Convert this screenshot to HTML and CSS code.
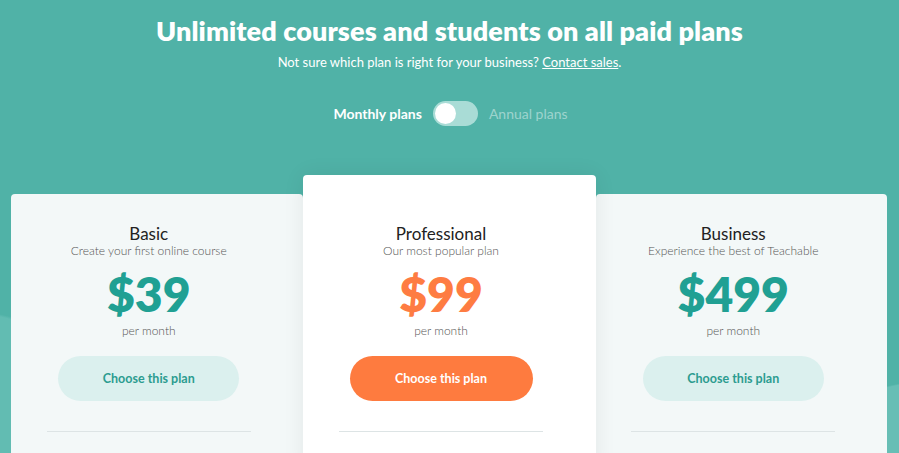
FILE: index.html
```html
<!DOCTYPE html>
<html>
	<head>
		<meta charset="utf-8">
		<title>Pricing</title>
		<link rel="stylesheet" href="styles.css">
	</head>
	<body>
		<div class="pricing">
			<h1 class="title">Unlimited courses and students on all paid plans</h1>
			<p class="sub">Not sure which plan is right for your business? <a href="#">Contact sales</a>.</p>

			<div class="switch">
				<span class="on">Monthly plans</span>
				<span class="toggle"><span class="knob"></span></span>
				<span class="off">Annual plans</span>
			</div>

			<div class="plans">
				<div class="plan">
					<div class="name">Basic</div>
					<div class="desc">Create your first online course</div>
					<div class="price">$39</div>
					<div class="per">per month</div>
					<a class="btn" href="#">Choose this plan</a>
					<div class="line"></div>
				</div>
				<div class="plan pro">
					<div class="name">Professional</div>
					<div class="desc">Our most popular plan</div>
					<div class="price">$99</div>
					<div class="per">per month</div>
					<a class="btn" href="#">Choose this plan</a>
					<div class="line"></div>
				</div>
				<div class="plan">
					<div class="name">Business</div>
					<div class="desc">Experience the best of Teachable</div>
					<div class="price">$499</div>
					<div class="per">per month</div>
					<a class="btn" href="#">Choose this plan</a>
					<div class="line"></div>
				</div>
			</div>
		</div>
	</body>
</html>
```

FILE: styles.css
```css
*{
	box-sizing: border-box;
}
body{
	margin: 0;
	background: #fff;
	font-family: Lato, "Open Sans", sans-serif;
	overflow: hidden;
}
.pricing{  /* 绿色大背景 */
	height: 453px;
	padding-top: 15px;
	text-align: center;
	color: #fff;
	background:
		radial-gradient(ellipse 160px 130px at -40px 440px, #62bcb2 98%, transparent 100%),
		radial-gradient(ellipse 140px 80px at 940px 460px, #67beb5 98%, transparent 100%),
		linear-gradient(#50b2a7 443px, #fff 443px);
}
.title{
	margin: 0;
	font-size: 27px;
	line-height: 31px;
	font-weight: 800;
	letter-spacing: 0.1px;
}
.sub{
	margin: 8px 0 0;
	font-size: 13px;
	line-height: 16px;
}
.sub a{
	color: #fff;
}
.switch{
	margin-top: 31px;
	display: flex;
	justify-content: center;
	align-items: center;
	gap: 11px;
	font-size: 14px;
	margin-left: 2px;
}
.switch .on{
	font-weight: 700;
}
.switch .off{
	color: rgba(255,255,255,0.45);
}
.toggle{
	width: 45px;
	height: 25px;
	border-radius: 13px;
	background: #a9dcd6;
	padding: 2px;
	display: flex;
}
.knob{
	width: 21px;
	height: 21px;
	border-radius: 50%;
	background: #fff;
}
.plans{
	margin-top: 49px;
	display: flex;
	align-items: flex-start;
	padding: 0 12px 0 11px;
}
.plan{  /* 三个价格卡片 */
	flex: 1;
	margin-top: 19px;
	height: 300px;
	padding: 30px 16px 0 0;
	border-radius: 4px;
	background: #f3f8f8;
	display: flex;
	flex-direction: column;
	align-items: center;
}
.plan.pro{
	margin-top: 0;
	padding-top: 49px;
	background: #fff;
	position: relative;
	box-shadow: 0 0 22px rgba(0,0,0,0.07);
	flex: 0 0 293px;
}
.name{
	font-size: 17px;
	line-height: 20px;
	color: #222;
}
.desc{
	font-size: 12px;
	line-height: 14px;
	font-weight: 300;
	color: #555;
}
.price{
	margin-top: 12px;
	font-size: 48px;
	line-height: 48px;
	font-weight: 800;
	color: #20a093;
}
.pro .price{
	color: #fe7c42;
}
.per{
	margin-top: 6px;
	font-size: 12px;
	line-height: 14px;
	font-weight: 300;
	color: #555;
}
.btn{
	margin-top: 18px;
	width: 181px;
	height: 45px;
	border-radius: 23px;
	background: #dbf0ee;
	color: #2c9c90;
	font-size: 12.5px;
	font-weight: 700;
	text-decoration: none;
	display: flex;
	align-items: center;
	justify-content: center;
}
.pro .btn{
	width: 183px;
	background: #fe7b3f;
	color: #fff;
}
.line{
	margin-top: 30px;
	width: 204px;
	height: 1px;
	background: #dde4e5;
}
```
